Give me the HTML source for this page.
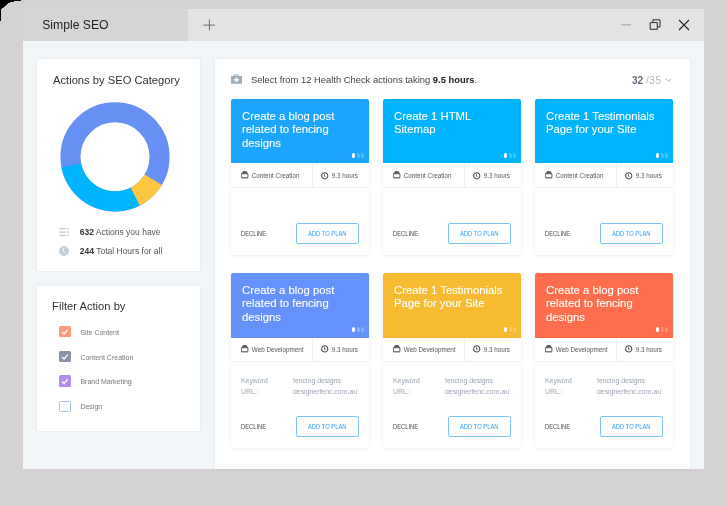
<!DOCTYPE html>
<html><head><meta charset="utf-8">
<style>
*{margin:0;padding:0;box-sizing:border-box}
html,body{width:727px;height:506px;overflow:hidden;background:#d3d1d2;font-family:"Liberation Sans",sans-serif}
.a{position:absolute}
.t{position:absolute;white-space:nowrap;line-height:1}
#win{left:23px;top:9px;width:681px;height:460px;background:#f2f6f9}
#tbar{left:0;top:0;width:681px;height:32px;background:#e2e3e2}
#tab{left:0;top:0;width:165px;height:32px;background:#d4d5d4}
.panel{background:#fff;box-shadow:0 0 2.5px rgba(130,150,170,.17)}
.card{position:absolute;width:138px;background:#fff;border-radius:2px;box-shadow:0 1px 5px rgba(0,0,0,.07),0 0 1px rgba(0,0,0,.05);overflow:hidden}
.hd{position:absolute;left:0;top:0;width:138px}
.ttl{position:absolute;left:11px;top:10.6px;color:#fff;font-size:11.3px;line-height:13.45px;width:114px;-webkit-text-stroke:0.1px #fff}
.dots{position:absolute;left:121px;width:14px;height:5px}
.dots i{position:absolute;top:0;width:3px;height:5px;border-radius:1.5px;background:rgba(255,255,255,.25)}
.dots i:first-child{background:#fff}
.info{position:absolute;left:0;width:138px;height:25px;border-bottom:1px solid #eef0f2}
.info .dv{position:absolute;left:81px;top:0;width:1px;height:24px;background:#eef0f2}
.it{position:absolute;top:10px;font-size:6.3px;color:#555;line-height:1;white-space:nowrap}
.dec{position:absolute;left:10px;font-size:6.5px;color:#4a4a4a;white-space:nowrap;line-height:1;transform:scaleX(0.89);transform-origin:0 0}
.btn{position:absolute;left:64.7px;width:63.8px;height:21.1px;border:1px solid #7cc4f4;border-radius:2px;color:#2f9fea;font-size:6.4px;line-height:19.6px;text-align:center;white-space:nowrap}
.btn span{display:inline-block;transform:scaleX(0.91)}
.kw{position:absolute;font-size:6.9px;color:#9aa3b3;white-space:nowrap;line-height:1}
.cb{position:absolute;left:23px;width:11.5px;height:11.5px;border-radius:1.5px}
.cbl{position:absolute;left:44px;font-size:7px;color:#777;white-space:nowrap;line-height:1}
</style></head><body>
<svg class="a" style="left:0;top:0" width="24" height="24" viewBox="0 0 24 24">
<path d="M0 0H21V1H14V2H10V3H8V4H7V5H6V6H4.5V7H3.5V8H2V9H1V21H0Z" fill="#000"/>
</svg>
<div id="root" class="a" style="left:0;top:0;width:727px;height:506px;will-change:transform">
<div id="win" class="a">
  <div id="tbar" class="a"></div>
  <div id="tab" class="a"></div>
  <div class="t" style="left:19.2px;top:9.7px;font-size:12.2px;color:#222">Simple SEO</div>
  <svg class="a" style="left:179px;top:9px" width="15" height="15"><path d="M1.3 7.1H12.9M7.4 1.5V12.2" stroke="#6a6a6a" stroke-width="1"/></svg>
  <!-- window controls -->
  <svg class="a" style="left:595px;top:9px" width="80" height="15">
    <path d="M3 6.8H13" stroke="#a3a3a3" stroke-width="1"/>
    <path d="M32.2 4.6H39.3V11.3H32.2Z" stroke="#2a2a2a" stroke-width="1" fill="none" stroke-linejoin="miter"/>
    <path d="M34.9 4.6V1.8H42V8.9H39.3" stroke="#2a2a2a" stroke-width="1" fill="none"/>
    <path d="M61 2L71 12M71 2L61 12" stroke="#222" stroke-width="1.1"/>
  </svg>
</div>

<!-- panel 1 -->
<div class="a panel" style="left:36.7px;top:59.4px;width:163.6px;height:212px"></div>
<div class="a panel" style="left:36.7px;top:285.5px;width:163.6px;height:145.5px"></div>
<div class="a panel" style="left:214.8px;top:59.4px;width:475.2px;height:409.6px"></div>
<div class="a" style="left:36.4px;top:59px;width:164.4px;height:212.7px">
  <div class="t" style="left:16.6px;top:16.4px;font-size:11.2px;color:#333">Actions by SEO Category</div>
  <svg class="a" style="left:0;top:0" width="165" height="160">
    <circle cx="79" cy="97.8" r="44.55" stroke="#6690f4" stroke-width="20.1" fill="none"/>
    <path d="M104.21 146.23A54.6 54.6 0 0 1 25.40 108.22L45.13 104.38A34.5 34.5 0 0 0 94.93 128.40Z" fill="#00b4fd"/>
    <path d="M125.80 125.92A54.6 54.6 0 0 1 103.79 146.45L94.66 128.54A34.5 34.5 0 0 0 108.57 115.57Z" fill="#fdc840"/>
  </svg>
  <svg class="a" style="left:22.8px;top:168.6px" width="11" height="9">
    <g fill="#b9c7d1"><rect x="0.3" y="0" width="6.2" height="1.2"/><rect x="8" y="0" width="2" height="1.2"/>
    <rect x="0.3" y="3.5" width="6.2" height="1.2"/><rect x="8" y="3.5" width="2" height="1.2"/>
    <rect x="0.3" y="6.8" width="6.2" height="1.2"/><rect x="8" y="6.8" width="2" height="1.2"/></g>
  </svg>
  <div class="t" style="left:43.4px;top:169.2px;font-size:8.5px;color:#555"><b style="color:#333">632</b> Actions you have</div>
  <svg class="a" style="left:23px;top:187px" width="10" height="10">
    <circle cx="5" cy="5" r="4.9" fill="#c3cfd7"/>
    <path d="M4.6 2.2V5.4L6.6 7.6" stroke="#fff" stroke-width="0.9" fill="none"/>
  </svg>
  <div class="t" style="left:43.4px;top:188.4px;font-size:8.5px;color:#555"><b style="color:#333">244</b> Total Hours for all</div>
</div>

<!-- panel 2 -->
<div class="a" style="left:36.4px;top:284.5px;width:164.4px;height:146.2px">
  <div class="t" style="left:15.7px;top:16.6px;font-size:11.2px;color:#333">Filter Action by</div>
  <div class="cb" style="top:41px;background:#fd9a7f"></div>
  <div class="cb" style="top:66px;background:#8893a9"></div>
  <div class="cb" style="top:90.5px;background:#b18ce9"></div>
  <div class="cb" style="top:116px;background:#fff;border:1px solid #a4c3ef"></div>
  <svg class="a" style="left:23px;top:41px" width="12" height="90">
    <g stroke="#fff" stroke-width="1.3" fill="none"><path d="M3 6L5 8L8.8 3.6"/><path d="M3 31L5 33L8.8 28.6"/><path d="M3 55.5L5 57.5L8.8 53.1"/></g>
  </svg>
  <div class="cbl" style="top:44.2px">Site Content</div>
  <div class="cbl" style="top:69.1px">Content Creation</div>
  <div class="cbl" style="top:93.7px">Brand Marketing</div>
  <div class="cbl" style="top:118.8px">Design</div>
</div>

<!-- right panel -->
<div class="a" style="left:214.4px;top:59px;width:475.8px;height:410px">
  <svg class="a" style="left:17px;top:14.5px" width="12" height="11">
    <path d="M3.2 2.4V1H7.1V2.4" stroke="#9dadba" stroke-width="1.1" fill="none"/>
    <rect x="0" y="2" width="11" height="7.7" rx="0.8" fill="#9dadba"/>
    <path d="M5.5 3.6V8.1M3.25 5.85H7.75" stroke="#fff" stroke-width="1.6"/>
  </svg>
  <div class="t" style="left:36.6px;top:16px;font-size:9.4px;color:#444">Select from 12 Health Check actions taking <b style="color:#222">9.5 hours</b>.</div>
  <div class="t" style="left:417.6px;top:16.5px;font-size:10px;color:#b3bac3"><b style="color:#606b7a;font-weight:700">32</b> <span style="letter-spacing:0.6px">/35</span></div>
  <svg class="a" style="left:451px;top:18px" width="8" height="6"><path d="M1 1.8L3.5 4.3L6 1.8" stroke="#9aa5b2" stroke-width="0.9" fill="none"/></svg>
</div>

<div id="cards">
<div class="card" style="left:231px;top:99px;height:156px"><div class="hd" style="height:64.4px;background:#1ca5fd"><div class="ttl">Create a blog post related to fencing designs</div><div class="dots" style="top:53.8px"><i style="left:0.3px"></i><i style="left:5px"></i><i style="left:9.3px"></i></div></div><div class="info" style="top:64px;"><svg class="a" style="left:10px;top:7.9px" width="9" height="9"><path d="M2.3 0.2H5.1L7.2 2.5Q7.4 2.8 7.4 3.2V6.5Q7.4 7.6 6.3 7.6H1.1Q0 7.6 0 6.5V3.2Q0 2.8 0.2 2.5Z" fill="#7a7a7a"/><path d="M2.3 0.2H5.1L7 2.4H0.4Z" fill="#5a5a5a"/><rect x="1.05" y="3.3" width="5.3" height="2.8" rx="0.6" fill="#fff"/></svg><div style="position:absolute;left:0;top:0;width:138px;height:24px;"><div class="it" style="left:20.8px">Content Creation</div><svg class="a" style="left:90px;top:8.7px" width="8" height="8"><circle cx="3.7" cy="3.8" r="3.1" stroke="#444" stroke-width="1.05" fill="none"/><path d="M3.5 2.2V4L4.6 5.2" stroke="#444" stroke-width="0.9" fill="none"/></svg><div class="it" style="left:100.7px">9.3 hours</div></div><div class="dv"></div></div><div class="dec" style="top:131.7px">DECLINE</div><div class="btn" style="top:124px"><span>ADD TO PLAN</span></div></div>
<div class="card" style="left:383px;top:99px;height:156px"><div class="hd" style="height:64.4px;background:#00b3fd"><div class="ttl">Create 1 HTML Sitemap</div><div class="dots" style="top:53.8px"><i style="left:0.3px"></i><i style="left:5px"></i><i style="left:9.3px"></i></div></div><div class="info" style="top:64px;"><svg class="a" style="left:10px;top:7.9px" width="9" height="9"><path d="M2.3 0.2H5.1L7.2 2.5Q7.4 2.8 7.4 3.2V6.5Q7.4 7.6 6.3 7.6H1.1Q0 7.6 0 6.5V3.2Q0 2.8 0.2 2.5Z" fill="#7a7a7a"/><path d="M2.3 0.2H5.1L7 2.4H0.4Z" fill="#5a5a5a"/><rect x="1.05" y="3.3" width="5.3" height="2.8" rx="0.6" fill="#fff"/></svg><div style="position:absolute;left:0;top:0;width:138px;height:24px;"><div class="it" style="left:20.8px">Content Creation</div><svg class="a" style="left:90px;top:8.7px" width="8" height="8"><circle cx="3.7" cy="3.8" r="3.1" stroke="#444" stroke-width="1.05" fill="none"/><path d="M3.5 2.2V4L4.6 5.2" stroke="#444" stroke-width="0.9" fill="none"/></svg><div class="it" style="left:100.7px">9.3 hours</div></div><div class="dv"></div></div><div class="dec" style="top:131.7px">DECLINE</div><div class="btn" style="top:124px"><span>ADD TO PLAN</span></div></div>
<div class="card" style="left:535px;top:99px;height:156px"><div class="hd" style="height:64.4px;background:#00b3fd"><div class="ttl">Create 1 Testimonials Page for your Site</div><div class="dots" style="top:53.8px"><i style="left:0.3px"></i><i style="left:5px"></i><i style="left:9.3px"></i></div></div><div class="info" style="top:64px;"><svg class="a" style="left:10px;top:7.9px" width="9" height="9"><path d="M2.3 0.2H5.1L7.2 2.5Q7.4 2.8 7.4 3.2V6.5Q7.4 7.6 6.3 7.6H1.1Q0 7.6 0 6.5V3.2Q0 2.8 0.2 2.5Z" fill="#7a7a7a"/><path d="M2.3 0.2H5.1L7 2.4H0.4Z" fill="#5a5a5a"/><rect x="1.05" y="3.3" width="5.3" height="2.8" rx="0.6" fill="#fff"/></svg><div style="position:absolute;left:0;top:0;width:138px;height:24px;"><div class="it" style="left:20.8px">Content Creation</div><svg class="a" style="left:90px;top:8.7px" width="8" height="8"><circle cx="3.7" cy="3.8" r="3.1" stroke="#444" stroke-width="1.05" fill="none"/><path d="M3.5 2.2V4L4.6 5.2" stroke="#444" stroke-width="0.9" fill="none"/></svg><div class="it" style="left:100.7px">9.3 hours</div></div><div class="dv"></div></div><div class="dec" style="top:131.7px">DECLINE</div><div class="btn" style="top:124px"><span>ADD TO PLAN</span></div></div>
<div class="card" style="left:231px;top:273px;height:175px"><div class="hd" style="height:65px;background:#6592fa"><div class="ttl">Create a blog post related to fencing designs</div><div class="dots" style="top:54.1px"><i style="left:0.3px"></i><i style="left:5px"></i><i style="left:9.3px"></i></div></div><div class="info" style="top:65px;height:24px;margin-top:-0.5px;"><svg class="a" style="left:10px;top:7.9px" width="9" height="9"><path d="M2.3 0.2H5.1L7.2 2.5Q7.4 2.8 7.4 3.2V6.5Q7.4 7.6 6.3 7.6H1.1Q0 7.6 0 6.5V3.2Q0 2.8 0.2 2.5Z" fill="#7a7a7a"/><path d="M2.3 0.2H5.1L7 2.4H0.4Z" fill="#5a5a5a"/><rect x="1.05" y="3.3" width="5.3" height="2.8" rx="0.6" fill="#fff"/></svg><div style="position:absolute;left:0;top:0;width:138px;height:24px;transform:translateY(-0.9px);"><div class="it" style="left:20.8px">Web Development</div><svg class="a" style="left:90px;top:8.7px" width="8" height="8"><circle cx="3.7" cy="3.8" r="3.1" stroke="#444" stroke-width="1.05" fill="none"/><path d="M3.5 2.2V4L4.6 5.2" stroke="#444" stroke-width="0.9" fill="none"/></svg><div class="it" style="left:100.7px">9.3 hours</div></div><div class="dv"></div></div><div class="kw" style="left:10px;top:105.4px">Keyword</div><div class="kw" style="left:62px;top:105.4px">fencing designs</div><div class="kw" style="left:10px;top:116.1px">URL.:</div><div class="kw" style="left:62px;top:116.1px">designerfenc.com.au</div><div class="dec" style="top:150.7px">DECLINE</div><div class="btn" style="top:142.6px"><span>ADD TO PLAN</span></div></div>
<div class="card" style="left:383px;top:273px;height:175px"><div class="hd" style="height:65px;background:#f7bb31"><div class="ttl">Create 1 Testimonials Page for your Site</div><div class="dots" style="top:54.1px"><i style="left:0.3px"></i><i style="left:5px"></i><i style="left:9.3px"></i></div></div><div class="info" style="top:65px;height:24px;margin-top:-0.5px;"><svg class="a" style="left:10px;top:7.9px" width="9" height="9"><path d="M2.3 0.2H5.1L7.2 2.5Q7.4 2.8 7.4 3.2V6.5Q7.4 7.6 6.3 7.6H1.1Q0 7.6 0 6.5V3.2Q0 2.8 0.2 2.5Z" fill="#7a7a7a"/><path d="M2.3 0.2H5.1L7 2.4H0.4Z" fill="#5a5a5a"/><rect x="1.05" y="3.3" width="5.3" height="2.8" rx="0.6" fill="#fff"/></svg><div style="position:absolute;left:0;top:0;width:138px;height:24px;transform:translateY(-0.9px);"><div class="it" style="left:20.8px">Web Development</div><svg class="a" style="left:90px;top:8.7px" width="8" height="8"><circle cx="3.7" cy="3.8" r="3.1" stroke="#444" stroke-width="1.05" fill="none"/><path d="M3.5 2.2V4L4.6 5.2" stroke="#444" stroke-width="0.9" fill="none"/></svg><div class="it" style="left:100.7px">9.3 hours</div></div><div class="dv"></div></div><div class="kw" style="left:10px;top:105.4px">Keyword</div><div class="kw" style="left:62px;top:105.4px">fencing designs</div><div class="kw" style="left:10px;top:116.1px">URL.:</div><div class="kw" style="left:62px;top:116.1px">designerfenc.com.au</div><div class="dec" style="top:150.7px">DECLINE</div><div class="btn" style="top:142.6px"><span>ADD TO PLAN</span></div></div>
<div class="card" style="left:535px;top:273px;height:175px"><div class="hd" style="height:65px;background:#fe6d4c"><div class="ttl">Create a blog post related to fencing designs</div><div class="dots" style="top:54.1px"><i style="left:0.3px"></i><i style="left:5px"></i><i style="left:9.3px"></i></div></div><div class="info" style="top:65px;height:24px;margin-top:-0.5px;"><svg class="a" style="left:10px;top:7.9px" width="9" height="9"><path d="M2.3 0.2H5.1L7.2 2.5Q7.4 2.8 7.4 3.2V6.5Q7.4 7.6 6.3 7.6H1.1Q0 7.6 0 6.5V3.2Q0 2.8 0.2 2.5Z" fill="#7a7a7a"/><path d="M2.3 0.2H5.1L7 2.4H0.4Z" fill="#5a5a5a"/><rect x="1.05" y="3.3" width="5.3" height="2.8" rx="0.6" fill="#fff"/></svg><div style="position:absolute;left:0;top:0;width:138px;height:24px;transform:translateY(-0.9px);"><div class="it" style="left:20.8px">Web Development</div><svg class="a" style="left:90px;top:8.7px" width="8" height="8"><circle cx="3.7" cy="3.8" r="3.1" stroke="#444" stroke-width="1.05" fill="none"/><path d="M3.5 2.2V4L4.6 5.2" stroke="#444" stroke-width="0.9" fill="none"/></svg><div class="it" style="left:100.7px">9.3 hours</div></div><div class="dv"></div></div><div class="kw" style="left:10px;top:105.4px">Keyword</div><div class="kw" style="left:62px;top:105.4px">fencing designs</div><div class="kw" style="left:10px;top:116.1px">URL.:</div><div class="kw" style="left:62px;top:116.1px">designerfenc.com.au</div><div class="dec" style="top:150.7px">DECLINE</div><div class="btn" style="top:142.6px"><span>ADD TO PLAN</span></div></div>
</div>
</div>
</body></html>
